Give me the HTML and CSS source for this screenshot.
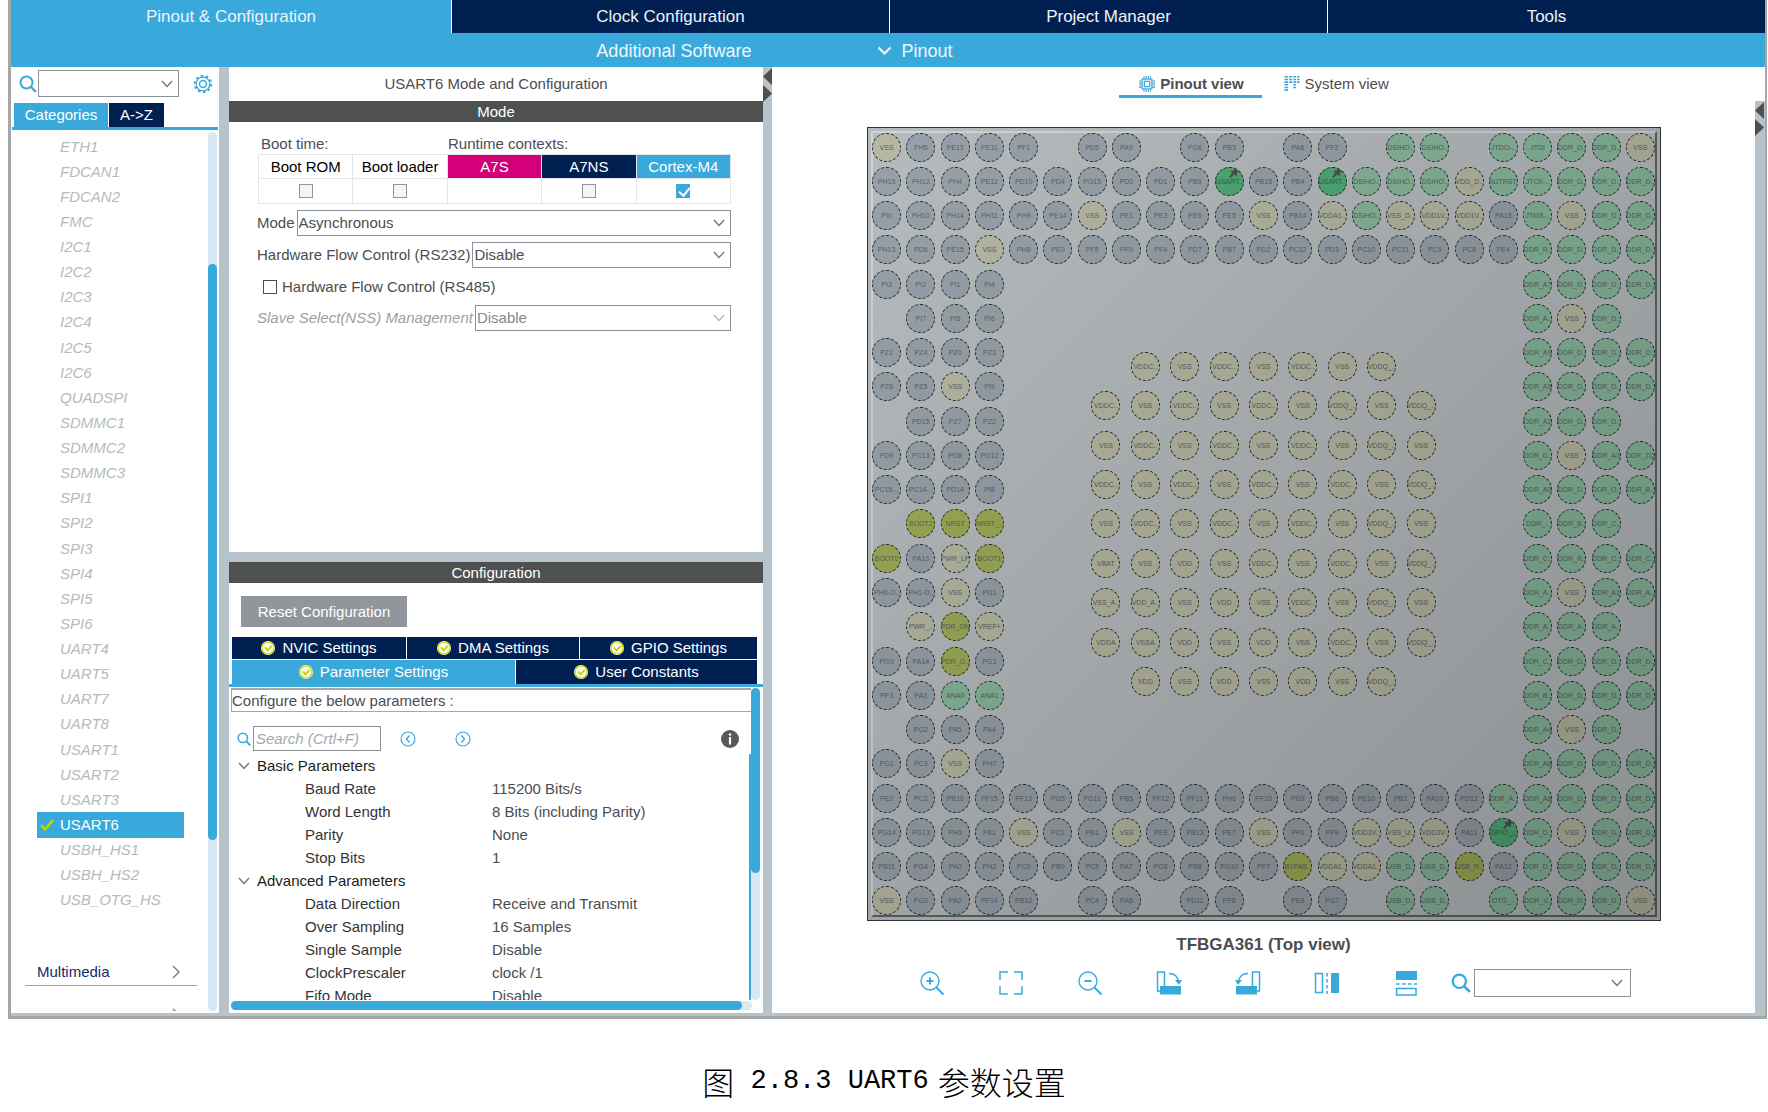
FILE: index.html
```html
<!DOCTYPE html>
<html lang="zh-CN">
<head>
<meta charset="utf-8">
<title>Pinout &amp; Configuration</title>
<link rel="stylesheet" href="styles.css">
</head>
<body>
<svg class="defs" aria-hidden="true">
  <symbol id="chev" viewBox="0 0 12 8"><path d="M1 1l5 5.500L11 1" fill="none" stroke="currentColor" stroke-width="1.300"/></symbol>
  <symbol id="search" viewBox="0 0 18 18"><circle cx="7.500" cy="7.500" r="6" fill="none" stroke="currentColor" stroke-width="2"/><path d="M12 12l5 5" stroke="currentColor" stroke-width="2.400"/></symbol>
  <symbol id="ok" viewBox="0 0 14 14"><circle cx="7" cy="7" r="7" fill="#fbfde8"/><circle cx="7" cy="7" r="6" fill="none" stroke="#c4d600" stroke-width="1.200"/><path d="M4 6.500l2.600 3L10.500 5" fill="none" stroke="#b9cc10" stroke-width="1.800"/></symbol>
  <symbol id="tack" viewBox="0 0 10 10"><path d="M5.500 0l4.500 4-2 .500-.500 4-2.500-2L1.500 10 0 9l3-4-1.500-2 3.500-.500z" fill="#4a5350"/></symbol>
</svg>

<main class="app">
  <nav class="top-tabs">
    <button class="top-tab active">Pinout &amp; Configuration</button>
    <button class="top-tab">Clock Configuration</button>
    <button class="top-tab">Project Manager</button>
    <button class="top-tab">Tools</button>
  </nav>
  <nav class="sub-bar">
    <button class="sub-item software">Additional Software</button>
    <button class="sub-item"><svg class="sub-chev" viewBox="0 0 15 10"><path d="M1.500 1.500l6 6 6-6" fill="none" stroke="currentColor" stroke-width="2.200"/></svg>Pinout</button>
  </nav>

  <div class="workspace">
    <aside class="side">
      <div class="side-search">
        <svg class="i18 blue"><use href="#search"/></svg>
        <span class="combo side-combo"><select aria-label="Search peripheral"><option></option></select><svg class="chev"><use href="#chev"/></svg></span>
        <button class="icon-btn" aria-label="Settings">
          <svg class="i20 blue" viewBox="0 0 20 20" fill="none" stroke="currentColor"><circle cx="10" cy="10" r="3.500" stroke-width="1.400"/><circle cx="10" cy="10" r="6.800" stroke-width="1.200"/><circle cx="10" cy="10" r="8.200" stroke-width="2" stroke-dasharray="2.580 2.572"/></svg>
        </button>
      </div>
      <div class="side-tabs">
        <button class="side-tab active">Categories</button>
        <button class="side-tab">A-&gt;Z</button>
      </div>
      <div class="side-body">
        <div class="side-content">
          <ul class="periphs">
            <li><a href="#">ETH1</a></li><li><a href="#">FDCAN1</a></li><li><a href="#">FDCAN2</a></li><li><a href="#">FMC</a></li>
            <li><a href="#">I2C1</a></li><li><a href="#">I2C2</a></li><li><a href="#">I2C3</a></li><li><a href="#">I2C4</a></li><li><a href="#">I2C5</a></li><li><a href="#">I2C6</a></li>
            <li><a href="#">QUADSPI</a></li><li><a href="#">SDMMC1</a></li><li><a href="#">SDMMC2</a></li><li><a href="#">SDMMC3</a></li>
            <li><a href="#">SPI1</a></li><li><a href="#">SPI2</a></li><li><a href="#">SPI3</a></li><li><a href="#">SPI4</a></li><li><a href="#">SPI5</a></li><li><a href="#">SPI6</a></li>
            <li><a href="#">UART4</a></li><li><a href="#">UART5</a></li><li><a href="#">UART7</a></li><li><a href="#">UART8</a></li>
            <li><a href="#">USART1</a></li><li><a href="#">USART2</a></li><li><a href="#">USART3</a></li>
            <li class="selected"><a href="#"><svg class="tick" viewBox="0 0 14 12"><path d="M1 6l4 4.500L13 1" fill="none" stroke="#c4d600" stroke-width="2.600"/></svg>USART6</a></li>
            <li><a href="#">USBH_HS1</a></li><li><a href="#">USBH_HS2</a></li><li><a href="#">USB_OTG_HS</a></li>
          </ul>
          <button class="category">Multimedia<svg class="cat-chev" viewBox="0 0 8 14"><path d="M1 1l6 6-6 6" fill="none" stroke="currentColor" stroke-width="1.300"/></svg></button>
          <div class="next-category"><svg class="cat-chev" viewBox="0 0 8 14"><path d="M1 1l6 6-6 6" fill="none" stroke="currentColor" stroke-width="1.300"/></svg></div>
        </div>
        <div class="vbar"><div class="thumb side-thumb"></div></div>
      </div>
    </aside>
    <div class="divider"></div>

    <section class="center">
      <div class="mode-panel">
        <h1 class="panel-title">USART6 Mode and Configuration</h1>
        <h2 class="bar">Mode</h2>
        <div class="mode-form">
          <div class="context-labels"><span>Boot time:</span><span>Runtime contexts:</span></div>
          <table class="contexts">
            <thead><tr><th id="c1">Boot ROM</th><th id="c2">Boot loader</th><th id="c3" class="a7s">A7S</th><th id="c4" class="a7ns">A7NS</th><th id="c5" class="m4">Cortex-M4</th></tr></thead>
            <tbody><tr>
              <td><input class="box" type="checkbox" disabled aria-labelledby="c1"></td>
              <td><input class="box" type="checkbox" disabled aria-labelledby="c2"></td>
              <td></td>
              <td><input class="box" type="checkbox" disabled aria-labelledby="c4"></td>
              <td><input class="box" type="checkbox" checked aria-labelledby="c5"></td>
            </tr></tbody>
          </table>
          <div class="field"><label for="mode">Mode</label><span class="combo"><select id="mode"><option>Asynchronous</option></select><svg class="chev"><use href="#chev"/></svg></span></div>
          <div class="field"><label for="flow">Hardware Flow Control (RS232)</label><span class="combo"><select id="flow"><option>Disable</option></select><svg class="chev"><use href="#chev"/></svg></span></div>
          <div class="field check"><input class="box plain" type="checkbox" id="rs485"><label for="rs485">Hardware Flow Control (RS485)</label></div>
          <div class="field off"><label for="nss">Slave Select(NSS) Management</label><span class="combo"><select id="nss" disabled><option>Disable</option></select><svg class="chev"><use href="#chev"/></svg></span></div>
        </div>
      </div>

      <div class="config-panel">
        <h2 class="bar">Configuration</h2>
        <button class="reset">Reset Configuration</button>
        <div class="config-tabs">
          <div class="tab-row">
            <button><svg class="i14"><use href="#ok"/></svg>NVIC Settings</button>
            <button><svg class="i14"><use href="#ok"/></svg>DMA Settings</button>
            <button><svg class="i14"><use href="#ok"/></svg>GPIO Settings</button>
          </div>
          <div class="tab-row second">
            <button class="active"><svg class="i14"><use href="#ok"/></svg>Parameter Settings</button>
            <button><svg class="i14"><use href="#ok"/></svg>User Constants</button>
          </div>
        </div>
        <div class="params-wrap">
          <div class="params">
            <p class="hint">Configure the below parameters :</p>
            <div class="params-main">
              <div class="find">
                <svg class="i14 blue"><use href="#search"/></svg>
                <input class="find-box" type="text" placeholder="Search (Crtl+F)" aria-label="Search">
                <button class="icon-btn prev" aria-label="Previous"><svg class="i16 blue" viewBox="0 0 16 16" fill="none" stroke="currentColor"><circle cx="8" cy="8" r="7" stroke-width="1.200"/><path d="M9.500 4.500L6.500 8l3 3.500" stroke-width="1.400"/></svg></button>
                <button class="icon-btn next" aria-label="Next"><svg class="i16 blue" viewBox="0 0 16 16" fill="none" stroke="currentColor"><circle cx="8" cy="8" r="7" stroke-width="1.200"/><path d="M6.500 4.500l3 3.500-3 3.500" stroke-width="1.400"/></svg></button>
                <button class="icon-btn info" aria-label="Information"><svg class="i18" viewBox="0 0 18 18"><circle cx="9" cy="9" r="9" fill="#58595b"/><circle cx="9" cy="4.500" r="1.300" fill="#fff"/><path d="M9 7v7.500" fill="none" stroke="#fff" stroke-width="2.200"/></svg></button>
              </div>
              <table class="param-table">
                <tbody>
                  <tr><th colspan="2"><svg class="chev"><use href="#chev"/></svg>Basic Parameters</th></tr>
                  <tr><td>Baud Rate</td><td>115200 Bits/s</td></tr>
                  <tr><td>Word Length</td><td>8 Bits (including Parity)</td></tr>
                  <tr><td>Parity</td><td>None</td></tr>
                  <tr><td>Stop Bits</td><td>1</td></tr>
                  <tr><th colspan="2"><svg class="chev"><use href="#chev"/></svg>Advanced Parameters</th></tr>
                  <tr><td>Data Direction</td><td>Receive and Transmit</td></tr>
                  <tr><td>Over Sampling</td><td>16 Samples</td></tr>
                  <tr><td>Single Sample</td><td>Disable</td></tr>
                  <tr><td>ClockPrescaler</td><td>clock /1</td></tr>
                  <tr><td>Fifo Mode</td><td>Disable</td></tr>
                </tbody>
              </table>
            </div>
          </div>
          <div class="vbar"><div class="thumb param-thumb"></div></div>
        </div>
        <div class="hbar"><div class="thumb"></div></div>
      </div>
    </section>
    <div class="divider arrows"><svg viewBox="0 0 9 36"><path d="M9 1v17L0 9.500zM0 18v17l9-8.500z" fill="#4f4f50"/></svg></div>

    <section class="right">
      <div class="view-tabs">
        <button class="view-tab active"><svg class="i16 blue" viewBox="0 0 18 18" fill="none" stroke="currentColor"><rect x="3.500" y="3.500" width="11" height="11" stroke-width="1.400"/><rect x="6" y="6" width="6" height="6" stroke-width="1.400"/><path d="M5 1.500h9M5 16.500h9" stroke-width="3" stroke-dasharray="1.200 1.200"/><path d="M1.500 5v9M16.500 5v9" stroke-width="3" stroke-dasharray="1.200 1.200"/></svg>Pinout view</button>
        <button class="view-tab"><svg class="i16 blue" viewBox="0 0 18 18" fill="none" stroke="currentColor" stroke-dasharray="1.800 1.200"><path d="M2.500 0v18" stroke-width="4"/><path d="M7.500 0v9" stroke-width="3.500"/><path d="M12 0v14" stroke-width="3"/><path d="M16 0v9" stroke-width="3"/></svg>System view</button>
      </div>
      <div class="package">
        <div class="ring" id="ring"></div>
        <div class="core" id="core"></div>
      </div>
      <p class="package-name">TFBGA361 (Top view)</p>
      <div class="tools">
        <button class="icon-btn" aria-label="Zoom in"><svg class="i26 blue" viewBox="0 0 26 26" fill="none" stroke="currentColor" stroke-width="1.400"><circle cx="11" cy="11" r="9"/><path d="M17.500 17.500l7 7" stroke-width="2"/><path d="M11 7.500v7M7.500 11h7" stroke-width="2"/></svg></button>
        <button class="icon-btn" aria-label="Fit"><svg class="i26 blue" viewBox="0 0 26 26" fill="none" stroke="currentColor" stroke-width="1.500"><path d="M10 2H2v8M16 2h8v8M10 24H2v-8M16 24h8v-8"/></svg></button>
        <button class="icon-btn" aria-label="Zoom out"><svg class="i26 blue" viewBox="0 0 26 26" fill="none" stroke="currentColor" stroke-width="1.400"><circle cx="11" cy="11" r="9"/><path d="M17.500 17.500l7 7" stroke-width="2"/><path d="M7.500 11h7" stroke-width="2"/></svg></button>
        <button class="icon-btn" aria-label="Rotate right"><svg class="i26 blue" viewBox="0 0 26 26"><path d="M4 21H1.500V2h7v14M13 3.500c6 0 9 3 9.500 9" fill="none" stroke="currentColor" stroke-width="1.500"/><path d="M19 10h7l-3 5zM4 16h21v8.500H4z" fill="currentColor"/></svg></button>
        <button class="icon-btn" aria-label="Rotate left"><svg class="i26 blue" viewBox="0 0 26 26"><path d="M22 21h2.500V2h-7v14M13 3.500c-6 0-9 3-9.500 9" fill="none" stroke="currentColor" stroke-width="1.500"/><path d="M7 10H0l3 5zM1 16h21v8.500H1z" fill="currentColor"/></svg></button>
        <button class="icon-btn" aria-label="Flip horizontally"><svg class="i26 blue" viewBox="0 0 26 26"><path d="M1.500 3.500h7v19h-7z" fill="none" stroke="currentColor" stroke-width="1.500"/><path d="M13 3v21" stroke="currentColor" stroke-width="1.500" stroke-dasharray="3.500 2.500"/><path d="M17 3h8v20h-8z" fill="currentColor"/></svg></button>
        <button class="icon-btn" aria-label="Flip vertically"><svg class="i26 blue" viewBox="0 0 26 26"><path d="M3 1h21v9H3z" fill="currentColor"/><path d="M3 14h21" stroke="currentColor" stroke-width="1.500" stroke-dasharray="3.500 2.500"/><path d="M3.500 18.500h19.500v6.500H3.500z" fill="none" stroke="currentColor" stroke-width="1.500"/></svg></button>
        <div class="pin-search">
          <svg class="i20 blue"><use href="#search"/></svg>
          <span class="combo"><select aria-label="Find pin"><option></option></select><svg class="chev"><use href="#chev"/></svg></span>
        </div>
      </div>
    </section>
    <div class="divider edge arrows"><svg viewBox="0 0 9 36"><path d="M9 1v17L0 9.500zM0 18v17l9-8.500z" fill="#4f4f50"/></svg></div>
  </div>
</main>
<p class="caption"><span>图</span><span class="latin"> 2.8.3 UART6</span><span class="after">参数设置</span></p>
<script src="pins.js"></script>
</body>
</html>
```

FILE: styles.css
```css
* { box-sizing: border-box; }

body {
  margin: 0;
  background: #fff;
  color: #4c4d50;
  font: 15px/20px "Liberation Sans", Arial, sans-serif;
}

h1, h2, p, ul { margin: 0; padding: 0; font: inherit; }
button, input, select { font: inherit; color: inherit; margin: 0; border-radius: 0; }
button { border: 0; padding: 0; background: none; white-space: nowrap; }
svg { display: block; flex: none; }

.defs { position: absolute; width: 0; height: 0; }
.blue { color: #39a9dc; }
.i14 { width: 14px; height: 14px; }
.i16 { width: 16px; height: 16px; }
.i18 { width: 18px; height: 18px; }
.i20 { width: 20px; height: 20px; }
.i26 { width: 26px; height: 26px; }

.app {
  margin: 0 1px 0 8px;
  border: solid #a6a6a6;
  border-width: 0 2px 3px 3px;
}

/* header */
.top-tabs { display: grid; grid-template-columns: 440px repeat(3, 1fr); gap: 1px; background: #fff; }
.top-tab { height: 33px; background: #002052; color: #eef3f8; font-size: 17px; }
.top-tab.active { background: #39a9dc; }
.sub-bar { display: flex; height: 34px; padding-top: 1px; background: #39a9dc; color: #eef7fc; font-size: 18px; }
.sub-item { display: flex; align-items: center; gap: 9px; }
.software { width: 49%; padding-right: 119px; margin-right: 7px; justify-content: flex-end; }
.sub-chev { width: 15px; height: 10px; }

/* columns */
.workspace { display: grid; grid-template-columns: 208px 10px 534px 9px 1fr 10px; border-bottom: 3px solid #b7c3ca; }
.divider { background: #b7c3ca; }
.edge { margin-top: 34px; }
.arrows svg { width: 9px; height: 36px; }

/* combo boxes */
.combo { display: grid; align-items: center; border: 1px solid #8a9299; background: #fff; height: 26px; flex: 1; }
.combo select { grid-area: 1 / 1; width: 100%; height: 24px; border: 0; padding: 0 24px 0 1px; background: none; appearance: none; opacity: 1; }
.chev { grid-area: 1 / 1; justify-self: end; margin-right: 5px; width: 12px; height: 8px; color: #6f757a; pointer-events: none; }

/* left column */
.side { display: flex; flex-direction: column; }
.side-search { display: flex; align-items: center; padding: 3px 0 6px 8px; }
.side-combo { flex: none; width: 141px; height: 27px; margin: 0 14px 0 1px; }
.side-combo select { height: 25px; }
.side-tabs { display: flex; gap: 1px; margin: 0 1px; padding-left: 2px; border-bottom: 3px solid #39a9dc; }
.side-tab { height: 24px; width: 55px; background: #002052; color: #fff; }
.side-tab.active { width: 94px; background: #39a9dc; }
.side-body { flex: 1; display: flex; padding: 2px 2px 2px 0; }
.side-content { flex: 1; display: flex; flex-direction: column; }
.vbar { width: 9px; border-radius: 5px; background: #d8e8f5; }
.thumb { border-radius: 5px; background: #39a9dc; }
.side-thumb { height: 576px; margin-top: 132px; }
.periphs { list-style: none; display: flex; flex-direction: column; height: 779px; margin-top: 2px; }
.periphs li { flex: 1; margin: 0 24px 0 26px; display: flex; }
.periphs a { flex: 1; display: flex; align-items: center; padding-left: 23px; color: #b3bbc0; font-style: italic; text-decoration: none; white-space: nowrap; }
.periphs .selected { background: #39a9dc; }
.periphs .selected a { padding-left: 3px; color: #fff; font-style: normal; }
.tick { width: 14px; height: 12px; margin-right: 6px; }
.category { display: flex; justify-content: space-between; align-items: center; height: 27px; margin: 46px 11px 0 14px; padding: 0 17px 0 12px; border-bottom: 1px solid #9aa6ad; color: #16286b; }
.cat-chev { width: 8px; height: 14px; color: #6f757a; }
.next-category { display: flex; align-items: flex-start; justify-content: flex-end; height: 3px; margin: auto 28px 0 0; overflow: hidden; }

/* center column */
.center { display: flex; flex-direction: column; background: #b7c3ca; gap: 10px; }
.mode-panel { background: #fff; height: 485px; }
.config-panel { background: #fff; flex: 1; display: flex; flex-direction: column; }
.panel-title { height: 34px; line-height: 34px; text-align: center; }
.bar { height: 21px; line-height: 21px; background: #4f5150; color: #fff; text-align: center; }
.mode-form { padding: 12px 32px 0 28px; }
.context-labels { display: grid; grid-template-columns: 187px 1fr; padding-left: 4px; }
.contexts { width: 473px; margin: 0 0 6px 1px; border-collapse: collapse; table-layout: fixed; }
.contexts th, .contexts td { height: 24px; padding: 0; border: 1px solid #e3e6e8; text-align: center; font-weight: normal; color: #000; }
.contexts td { height: 25px; }
.contexts .a7s { background: #d4007a; color: #fff; }
.contexts .a7ns { background: #002052; color: #fff; }
.contexts .m4 { background: #39a9dc; color: #fff; }
.box { appearance: none; display: block; width: 14px; height: 14px; margin: 0 auto; border: 1px solid #8f979d; background: #f3f4f4; }
.box:checked { border-color: #39a9dc; background: #39a9dc; }
.box:checked::after { content: ""; display: block; width: 5px; height: 9px; margin: 0 0 0 4px; border: solid #fff; border-width: 0 2px 2px 0; transform: rotate(40deg); }
.plain { margin: 0 5px 0 6px; border-color: #4c4d50; background: #fff; }
.field { display: flex; align-items: center; gap: 2px; height: 26px; margin-bottom: 6px; white-space: nowrap; }
.check { gap: 0; height: 25px; }
.off { font-style: italic; color: #9b9fa3; }
.off select { font-style: normal; color: #85898d; }
.off .chev { color: #b5babe; }

/* configuration */
.reset { align-self: flex-start; width: 166px; height: 31px; margin: 13px 0 10px 12px; background: #90969c; color: #fff; }
.config-tabs { padding: 0 6px 0 3px; border-bottom: 3px solid #39a9dc; }
.tab-row { display: grid; grid-template-columns: 174px 172px 1fr; gap: 1px; }
.tab-row.second { grid-template-columns: 283px 1fr; margin-top: 1px; }
.tab-row button { display: flex; align-items: center; justify-content: center; gap: 7px; height: 22px; background: #002052; color: #fff; }
.tab-row.second button { height: 24px; }
.tab-row .active { background: #39a9dc; }
.params-wrap { flex: 1; display: flex; contain: size; padding: 1px 3px 0 2px; }
.params { flex: 1; display: flex; flex-direction: column; overflow: hidden; }
.hint { flex: none; border: solid #a3a8ac; border-width: 2px 0 1px 1px; height: 24px; line-height: 22px; }
.params-main { flex: 1; padding: 14px 0 0 6px; overflow: hidden; }
.find { display: flex; align-items: center; height: 25px; padding-right: 12px; }
.find-box { width: 128px; height: 25px; margin: 0 19px 0 2px; padding: 0 2px; border: 1px solid #8a9299; }
.find-box::placeholder { color: #a5a9ad; font-style: italic; opacity: 1; }
.prev { margin-right: 39px; }
.info { margin-left: auto; }
.param-table { width: 100%; margin-top: 3px; border-collapse: collapse; border-right: 2px solid #39a9dc; }
.param-table td, .param-table th { height: 23px; padding: 0 0 0 68px; text-align: left; }
.param-table td + td { width: 258px; padding-left: 0; white-space: nowrap; }
.param-table td:first-child { color: #333437; }
.param-table th { padding: 0; font-weight: normal; color: #1c1d20; }
.param-table th .chev { display: inline-block; margin: 0 7px 1px 1px; }
.param-thumb { height: 185px; }
.hbar { height: 9px; margin: 1px 11px 3px 2px; border-radius: 5px; background: #d8e8f5; }
.hbar .thumb { width: 98%; height: 9px; }

/* package view */
.right { display: flex; flex-direction: column; align-items: center; }
.view-tabs { display: flex; align-items: flex-start; gap: 18px; margin: 0 15px 29px 0; }
.view-tab { display: flex; align-items: center; gap: 5px; height: 31px; padding: 5px 4px 0; border-bottom: 3px solid transparent; }
.view-tab.active { padding: 5px 18px 0 20px; border-bottom-color: #39a9dc; font-weight: bold; }
.package {
  position: relative;
  width: 794px;
  max-width: 100%;
  aspect-ratio: 1;
  display: grid;
  place-items: center;
  padding: 2px;
  border: 1px solid #2e3335;
  background: #b6bbbe;
}
.package::before { content: ""; position: absolute; inset: 3px; border: 2px solid #5f6466; border-top-color: #d0d4d6; border-left-color: #d0d4d6; }
.package::after { content: ""; position: absolute; inset: 0; background: linear-gradient(135deg, rgba(0, 0, 0, 0), rgba(0, 0, 0, .240)); pointer-events: none; }
.ring, .core { grid-area: 1 / 1; display: grid; position: relative; }
.ring { width: 100%; height: 100%; grid-template: repeat(23, 1fr) / repeat(23, 1fr); }
.core { width: 45%; height: 45%; grid-template: repeat(9, 1fr) / repeat(9, 1fr); }
.ring > *, .core > * { min-width: 0; min-height: 0; }
.pin {
  position: relative;
  place-self: center;
  display: flex;
  justify-content: center;
  align-items: center;
  width: 29px;
  height: 29px;
  border: 1px dashed #23292b;
  border-radius: 50%;
  color: #596165;
  font-size: 7px;
  line-height: 9px;
  white-space: nowrap;
}
.io { background: #98a1a9; }
.power { background: #b7b8a2; }
.fixed { background: #88b79c; }
.boot { background: #9eac55; }
.used { background: #50aa75; color: #3c5f4b; }
.tack { position: absolute; top: 0; right: 4px; width: 10px; height: 10px; }
.package-name { margin-top: 14px; font-size: 17px; font-weight: bold; }
.tools { display: flex; align-items: center; gap: 53px; margin: 14px 0 16px 22px; height: 28px; }
.pin-search { display: flex; align-items: center; gap: 3px; margin-left: -21px; }
.pin-search .combo { width: 157px; height: 28px; }
.pin-search .chev { margin-right: 7px; }

.caption { display: flex; justify-content: center; margin-top: 42px; color: #000; font: 300 32px/40px "Noto Sans CJK SC", sans-serif; }
.latin { font: 27px/40px "Liberation Mono", monospace; white-space: pre; }
.after { margin-left: 9px; }
```

FILE: pins.js
```js
// Ball map of the package, one string per row; "-" is an empty position and
// "=" stands for the empty middle between the left and right edge columns.
const D = "DDR_D..";
const ring = [
  `VSS PH5 PE13 PE11 PF1 - PD5 PA9 - PG6 PB3 - PA8 PF2 - DSIHO.. DSIHO.. - JTDO-.. JTDI ${D} ${D} VSS`,
  `PH15 PH12 PH4 PE12 PD10 PD4 PG15 PD0 PD1 PB9 USART.. PB15 PB4 USART.. DSIHO.. DSIHO.. DSIHO.. VDD_D.. NJTRST JTCK-.. ${D} ${D} ${D}`,
  `PI0 PH10 PH14 PH11 PH9 PE14 VSS PE1 PE3 PE6 PE5 VSS PB14 VDDA1.. DSIHO.. VSS_D.. VDD1V.. VDD1V.. PA15 JTMS-.. VSS ${D} ${D}`,
  `PH13 PD6 PE15 VSS PH8 PE0 PF5 PF0 PF4 PD7 PB7 PD2 PC12 PD3 PC10 PC11 PC9 PC8 PE4 DDR_R.. ${D} ${D} ${D}`,
  `PI3 PI2 PI1 PI4 = DDR_A7 ${D} ${D} ${D}`,
  `- PI7 PI5 PI6 = DDR_A.. VSS ${D} -`,
  `PZ1 PZ4 PZ0 PZ3 = DDR_A9 ${D} ${D} ${D}`,
  `PZ6 PZ5 VSS PI9 = DDR_A5 ${D} ${D} ${D}`,
  `- PD15 PZ7 PZ2 = DDR_A2 ${D} ${D} -`,
  `PD9 PC13 PD8 PG12 = ${D} VSS DDR_A3 DDR_ZQ`,
  `PC15-.. PC14-.. PD14 PI8 = DDR_A0 ${D} DDR_O.. DDR_B..`,
  `- BOOT2 NRST NRST_.. = DDR_.. DDR_B.. DDR_C.. -`,
  `BOOT0 PA13 PWR_LP BOOT1 = DDR_C.. DDR_R.. DDR_C.. DDR_C..`,
  `PH0-O.. PH1-O.. VSS PI11 = DDR_A.. VSS DDR_A1 DDR_A..`,
  `- PWR_.. PDR_ON VREF+ = DDR_A.. DDR_A.. DDR_A.. -`,
  `PI10 PA14 PDR_O.. PG3 = DDR_C.. ${D} ${D} ${D}`,
  `PF3 PA3 ANA0 ANA1 = DDR_B.. ${D} ${D} ${D}`,
  `- PG2 PA5 PA4 = DDR_A4 VSS ${D} -`,
  `PG1 PC3 VSS PH7 = DDR_A6 ${D} ${D} ${D}`,
  `PE2 PC2 PB10 PF15 PF13 PG5 PG11 PB5 PF12 PF11 PH6 PF10 PG9 PB6 PE10 PB2 PA10 PD12 DDR_A.. DDR_A8 ${D} ${D} ${D}`,
  `PG14 PG13 PH3 PA1 VSS PC1 PB1 VSS PE9 PB13 PE7 VSS PF6 PF9 VDD3V.. VSS_U.. VDD3V.. PA11 GPIO_.. ${D} VSS ${D} ${D}`,
  `PB11 PG4 PA0 PH2 PC0 PB0 PC5 PA7 PG8 PB8 PG10 PF7 BYPAS.. VDDA1.. VDDA1.. USB_D.. USB_D.. USB_R.. PA12 ${D} ${D} ${D} ${D}`,
  `VSS PG0 PA2 PF14 PB12 - PC4 PA6 - PD11 PF8 - PE8 PG7 - USB_D.. USB_D.. - OTG_.. DDR_V.. ${D} ${D} VSS`,
];
const core = [
  "- VDDC.. VSS VDDC.. VSS VDDC.. VSS VDDQ_.. -",
  "VDDC.. VSS VDDC.. VSS VDDC.. VSS VDDQ_.. VSS VDDQ_..",
  "VSS VDDC.. VSS VDDC.. VSS VDDC.. VSS VDDQ_.. VSS",
  "VDDC.. VSS VDDC.. VSS VDDC.. VSS VDDC.. VSS VDDQ_..",
  "VSS VDDC.. VSS VDDC.. VSS VDDC.. VSS VDDQ_.. VSS",
  "VBAT VSS VDD VSS VDDC.. VSS VDDC.. VSS VDDQ_..",
  "VSS_A.. VDD_A.. VSS VDD VSS VDDC.. VSS VDDQ_.. VSS",
  "VDDA VSSA VDD VSS VDD VSS VDDC.. VSS VDDQ_..",
  "- VDD VSS VDD VSS VDD VSS VDDQ_.. -",
];

function kind(name) {
  if (/^P[A-Z]\d/.test(name)) return "io";
  if (/^(VSS|VDD|VBAT|VREF|PWR)/.test(name)) return "power";
  if (/^(BOOT|NRST|PDR|BYPAS|USB_R)/.test(name)) return "boot";
  if (/^(USART|GPIO)/.test(name)) return "used";
  return "fixed";
}

function draw(id, rows) {
  const host = document.getElementById(id);
  host.innerHTML = rows.map((row) =>
    row.replace("=", Array(15).fill("-").join(" ")).split(" ").map((name) => {
      if (name === "-") return "<span></span>";
      const k = kind(name);
      const tack = k === "used" ? '<svg class="tack"><use href="#tack"/></svg>' : "";
      return `<span class="pin ${k}"><span>${name}</span>${tack}</span>`;
    }).join("")
  ).join("");
}

draw("ring", ring);
draw("core", core);
```
